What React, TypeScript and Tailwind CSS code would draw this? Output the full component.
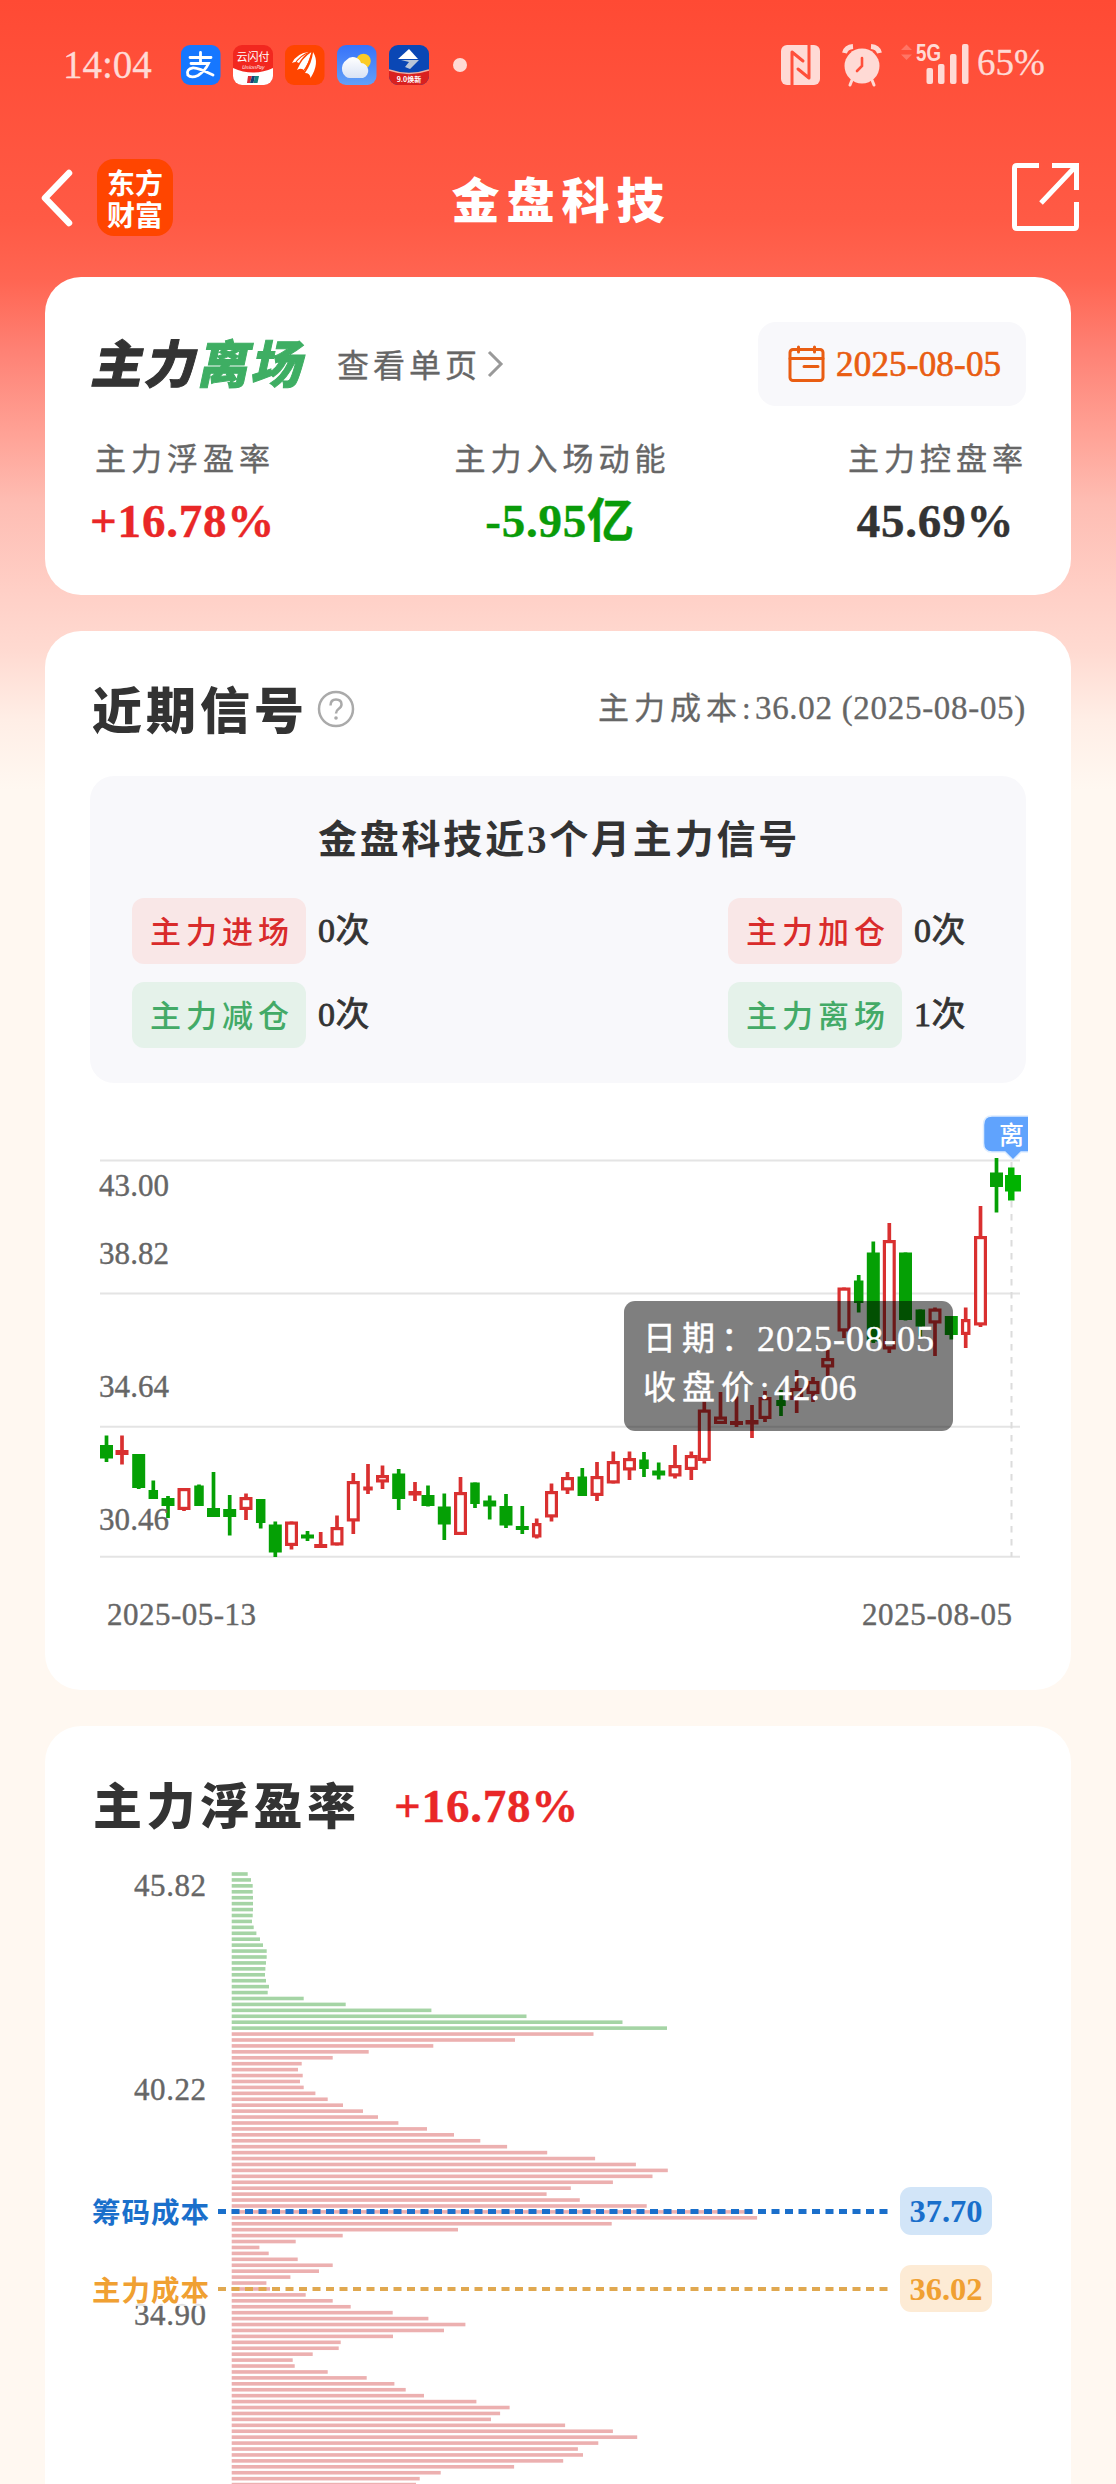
import React from "react";

type Candle = { up: boolean; x: number; hi: number; top: number; bot: number; lo: number; w?: number };

const c = (k: string, x: number, hi: number, top: number, bot: number, lo: number, w = 13): Candle => ({
  up: k === "r", x, hi, top, bot, lo, w,
});

const candles: Candle[] = [
  c("g", 106.5, 1435.5, 1445, 1458.5, 1462),
  c("r", 122, 1435.5, 1450, 1455, 1464.5),
  c("g", 138.7, 1454, 1454, 1488, 1489),
  c("g", 153.3, 1480.5, 1490, 1499, 1499, 9.5),
  c("g", 168, 1496, 1498, 1506, 1518),
  c("r", 184, 1488, 1488, 1510, 1511),
  c("g", 199, 1484.5, 1485.5, 1506, 1506, 9.5),
  c("g", 213.5, 1472, 1508, 1517, 1517),
  c("g", 229.7, 1495, 1509, 1517, 1535.5),
  c("r", 246, 1493.5, 1497, 1510, 1520),
  c("g", 260.7, 1499, 1499, 1523, 1528.5, 9.5),
  c("g", 275.3, 1521.5, 1524.5, 1552.5, 1557),
  c("r", 291.5, 1521.5, 1521.5, 1546, 1549.5),
  c("g", 307.5, 1531, 1534.5, 1538.5, 1541),
  c("r", 320.7, 1532, 1544, 1548, 1548),
  c("r", 337, 1515.5, 1527, 1545.5, 1545.5),
  c("r", 353.3, 1473, 1481, 1521.5, 1534),
  c("r", 368, 1464, 1486.5, 1490.5, 1494, 9.5),
  c("r", 382.5, 1465.5, 1475, 1482.5, 1489),
  c("g", 398.7, 1469, 1473.5, 1499, 1510),
  c("r", 415, 1482, 1491, 1495.5, 1501),
  c("g", 428, 1485.5, 1495, 1506, 1506.5),
  c("g", 444.3, 1493.5, 1506.5, 1524.5, 1540),
  c("r", 460.5, 1477, 1492, 1535, 1535),
  c("g", 475, 1482.5, 1482.5, 1504, 1508, 9.5),
  c("g", 489.7, 1495.5, 1500.5, 1506.5, 1519.5),
  c("g", 506, 1494, 1506, 1525.5, 1528),
  c("g", 522.3, 1506, 1526, 1530, 1534),
  c("r", 536.7, 1518.5, 1523, 1537.5, 1538.5, 9.5),
  c("r", 551.5, 1483.5, 1491, 1517.5, 1521.5),
  c("r", 567.5, 1472, 1477, 1490.5, 1494),
  c("g", 582.3, 1468, 1476.5, 1496, 1496, 9.5),
  c("r", 597, 1462, 1476, 1496, 1501),
  c("r", 613.3, 1451.5, 1461, 1483.5, 1483.5),
  c("r", 629.5, 1451.5, 1458, 1470.5, 1480),
  c("g", 644, 1452, 1459.5, 1469, 1477, 9.5),
  c("g", 658.7, 1462.5, 1470.5, 1475.5, 1479.5),
  c("r", 675, 1445, 1465, 1476.5, 1478.5),
  c("r", 691.3, 1451.5, 1455, 1470, 1480),
  c("r", 704.3, 1401.5, 1409.5, 1461, 1463.5),
  c("r", 720.5, 1392, 1416.5, 1424, 1424),
  c("r", 736.5, 1396.5, 1421, 1425, 1427),
  c("r", 752, 1405, 1420, 1424.5, 1438),
  c("r", 765, 1391, 1397, 1419, 1422),
  c("g", 781, 1390, 1400, 1406, 1416, 9.5),
  c("r", 796.7, 1370, 1388, 1400, 1413),
  c("r", 813, 1377, 1381, 1394, 1402),
  c("r", 827.7, 1350, 1358, 1367.5, 1377),
  c("r", 844, 1287.5, 1287.5, 1331.5, 1338),
  c("g", 858.7, 1275, 1280.5, 1303, 1312.5, 9.5),
  c("g", 873.3, 1241.5, 1252.5, 1341.5, 1343),
  c("r", 889.3, 1223, 1240, 1349.5, 1353),
  c("g", 905.5, 1252.5, 1252.5, 1320, 1320.5),
  c("g", 920.3, 1309.5, 1309.5, 1326.5, 1336.5, 9.5),
  c("r", 935, 1307.5, 1308.5, 1323.5, 1356),
  c("g", 951.3, 1316, 1316, 1335, 1339.5),
  c("r", 965.7, 1307.5, 1319, 1335, 1348, 9.5),
  c("r", 980.5, 1206, 1236, 1325.5, 1327),
  c("g", 996.5, 1158, 1172.5, 1187, 1212.5),
];

const GREEN_BARS = 27;
const bars = [
  16, 19.3, 21, 21, 21.3, 21.3, 21.3, 21, 20.3, 22, 24.7, 28.3, 31.3, 35, 35, 34.3, 33.7, 33.3, 34.3, 37.3, 36, 72, 114,
  199.7, 294.8, 390.8, 435.3, 361.8, 283.3, 201.6, 137, 101, 70, 66.3, 71, 68.3, 72, 83.7, 96, 111.3, 131.3, 146.3,
  166.7, 195.3, 222.3, 248.6, 275.4, 315.5, 363.4, 404.2, 436.1, 420.8, 381.2, 339.1, 314.9, 348.1, 415, 521.5, 525.4,
  380, 226.3, 111, 64, 27.7, 37, 66, 101, 87.3, 58.7, 34.7, 38.3, 74, 101, 119, 161, 196.7, 233.7, 212.3, 161.3, 109,
  107, 81, 61, 63, 96, 135, 162.7, 174, 192.3, 244.7, 277.9, 268.4, 259.3, 333.4, 381.2, 405.5, 366.6, 346.2, 351.3,
  331.5, 282.4, 209, 188, 184.3,
];

function StatusBar() {
  return (
    <div className="flex h-[130px] items-center pl-[63px] text-[#ffdad5]">
      <span className="w-[118px] text-[39px] leading-[60px] [-webkit-text-stroke:0.3px]">14:04</span>
      <div className="flex gap-[12px]">
        <svg width="40" height="40" viewBox="0 0 40 40">
          <rect width="39.5" height="40" rx="9" fill="#1677ff" />
          <g stroke="#fff" strokeWidth="2.8" fill="none" strokeLinecap="round">
            <path d="M9 12.5H30M19.5 7.5V18.5M10 18.5H27.5Q24 26 17 30.5Q10 33.5 6.8 30Q5 24 12 22.8Q17 22.5 32 30" />
          </g>
        </svg>
        <div className="relative flex h-[40px] w-[40px] flex-col items-center overflow-hidden rounded-[9px] bg-[#f2271f] font-['Noto_Sans_CJK_SC',sans-serif] text-white">
          <span className="mt-[4px] text-[11px] leading-[15px] whitespace-nowrap">云闪付</span>
          <span className="text-[5px] leading-[5px] italic">UnionPay</span>
          <svg className="absolute bottom-0 left-0" width="40" height="17" viewBox="0 0 40 17">
            <path d="M0 0Q20 9 40 0V17H0Z" fill="#fff" />
            <path d="M15 8H19L17 15H14Z" fill="#d92b36" />
            <path d="M19 8H22L20.5 15H17Z" fill="#173f78" />
            <path d="M22 8H26L24.5 15H20.5Z" fill="#158080" />
          </svg>
        </div>
        <svg width="40" height="40" viewBox="0 0 40 40">
          <rect width="39.5" height="40" rx="9" fill="#ff4500" />
          <path d="M7 18Q12 8 24 7Q17 12 14 18Q11 16 7 18Z" fill="#fff" />
          <path d="M12 25Q17 13 26.5 7Q24 16 19.5 26Q17 22 12 25Z" fill="#fff" />
          <path d="M20 28Q27 18 28 7Q35 18 25.5 33Q25 28 20 28Z" fill="#fff" />
          <path d="M9 20Q15 10 25 7M17 28Q25 18 27.2 7" stroke="#ff4500" strokeWidth="1.2" fill="none" />
        </svg>
        <svg width="40" height="40" viewBox="0 0 40 40">
          <defs>
            <linearGradient id="sky" x1="0" y1="0" x2="0" y2="1">
              <stop offset="0" stopColor="#3672fa" />
              <stop offset="1" stopColor="#63a0f7" />
            </linearGradient>
            <linearGradient id="cloud" x1="0" y1="0" x2="0" y2="1">
              <stop offset="0" stopColor="#fff" />
              <stop offset="1" stopColor="#d9e2f5" />
            </linearGradient>
          </defs>
          <rect width="39.5" height="40" rx="9" fill="url(#sky)" />
          <circle cx="26.5" cy="16" r="7.3" fill="#fccb25" />
          <path d="M14 33a8 9.5 0 0 1-4.5-18a8.5 8.5 0 0 1 14.5 3a7.7 7.7 0 0 1 2 15z" fill="url(#cloud)" />
        </svg>
        <div className="relative h-[40px] w-[40px] overflow-hidden rounded-[9px] bg-[#0a47b5]">
          <svg width="40" height="40" viewBox="0 0 40 40">
            <path d="M0 25Q20 32 40 25V40H0Z" fill="#d9201f" />
            <path d="M0 25Q20 32 40 25" stroke="#f4b0a0" strokeWidth="1.5" fill="none" />
            <path d="M9 14L20 4L29 14Z" fill="#fff" />
            <path d="M12 15H30L21 24L16 22L20 17Z" fill="#b9c6d8" />
          </svg>
          <span className="absolute bottom-[2px] left-0 w-full text-center font-['Noto_Sans_CJK_SC',sans-serif] text-[7px] leading-[8px] font-bold whitespace-nowrap text-white">
            9.0焕新
          </span>
        </div>
      </div>
      <div className="ml-[24px] h-[14px] w-[14px] rounded-full bg-[#ffdad5]" />
      <div className="ml-[314px] flex items-center">
        <svg width="188" height="50" viewBox="782 40 188 50" className="overflow-visible">
          <rect x="782" y="45" width="39" height="40" rx="6" fill="#ffdad5" />
          <path d="M793 85V52L804 61M810 45V78L799 69" stroke="#ff4f3a" strokeWidth="3" fill="none" strokeLinecap="round" strokeLinejoin="round" />
          <circle cx="863" cy="66" r="17.5" fill="#ffdad5" />
          <path d="M863 58V66L858 71" stroke="#ff4f3a" strokeWidth="2.6" fill="none" strokeLinecap="round" />
          <path d="M845.5 53Q847 47 854 46.5M872 46.5Q879 47 880.5 53" stroke="#ffdad5" strokeWidth="5" fill="none" />
          <path d="M853 80L851 85M873 80L875 85" stroke="#ffdad5" strokeWidth="3" strokeLinecap="round" />
          <path d="M902 50L907.5 44.5L913 50ZM902 54.5L907.5 60L913 54.5Z" fill="#ff7565" />
          <text x="917" y="61" fontSize="23" fontWeight="700" textLength="25" lengthAdjust="spacingAndGlyphs" fill="#ffdad5" className="font-['Liberation_Sans',sans-serif]">5G</text>
          <g fill="#ffdad5">
            <rect x="927.5" y="68" width="6.5" height="16" rx="2" />
            <rect x="939" y="64" width="6.5" height="20" rx="2" />
            <rect x="951" y="54" width="6.5" height="30" rx="2" />
            <rect x="963" y="44" width="6.5" height="40" rx="2" />
          </g>
        </svg>
        <span className="mt-[-4px] ml-[8px] text-[37px] leading-[56px] [-webkit-text-stroke:0.3px]">65%</span>
      </div>
    </div>
  );
}

function Header() {
  return (
    <div className="flex h-[147px] items-start justify-between pt-[29px] pr-[36px] pl-[40px]">
      <div className="flex w-[133px] items-center justify-between">
        <svg width="34" height="60" viewBox="0 0 34 60">
          <path d="M29 5L5 30L29 55" stroke="#fff" strokeWidth="6.5" fill="none" strokeLinecap="round" strokeLinejoin="round" />
        </svg>
        <div className="flex h-[77px] w-[76px] flex-col items-center justify-center rounded-[17px] bg-[#ff4500] font-['Noto_Sans_CJK_SC',sans-serif] text-[28px] leading-[32px] font-bold text-white">
          <span>东方</span>
          <span>财富</span>
        </div>
      </div>
      <h1 className="mt-[3px] mr-[61px] h-[80px] text-[48px] leading-[80px] font-black tracking-[7px] text-white">金盘科技</h1>
      <svg className="mt-[3px]" width="69" height="70" viewBox="0 0 69 70">
        <g stroke="#fff" strokeWidth="5" fill="none">
          <path d="M28 3.5H6Q3.5 3.5 3.5 6V64Q3.5 66.5 6 66.5H63Q65.5 66.5 65.5 64V40" />
          <path d="M41 3.5H65.5V28M65 4L30 41" />
        </g>
      </svg>
    </div>
  );
}

function Metric({ label, value, tone }: { label: string; value: string; tone: string }) {
  return (
    <div className="flex flex-col items-center">
      <span className="mr-[-2px] pl-[3px] text-[31px] leading-[50px] tracking-[5px] text-[#666] [-webkit-text-stroke:0.4px]">{label}</span>
      <span className={"mt-[6px] text-[47px] leading-[60px] font-bold tracking-[0.8px] [-webkit-text-stroke:0.4px] " + tone}>{value}</span>
    </div>
  );
}

function SummaryCard() {
  return (
    <section className="h-[318px] rounded-[36px] bg-white px-[45px] pt-[45px]">
      <div className="flex h-[84px] items-center">
        <div className="h-[60px] w-[215px] skew-x-[-12deg] pl-[4px] font-['Noto_Sans_CJK_SC',sans-serif] text-[51px] leading-[54px] font-black tracking-[2.3px] whitespace-nowrap text-[#333] [-webkit-text-stroke:1px]">
          主力<span className="text-[#3eae63]">离场</span>
        </div>
        <span className="ml-[32px] pt-[3px] text-[32px] leading-[48px] tracking-[4px] text-[#666] [-webkit-text-stroke:0.4px]">查看单页</span>
        <svg className="ml-[5px]" width="18" height="30" viewBox="0 0 18 30">
          <path d="M3 3L15 15L3 27" stroke="#999" strokeWidth="3" fill="none" />
        </svg>
        <div className="ml-auto flex h-[84px] w-[268px] items-center rounded-[18px] bg-[#f8f8fb] pl-[30px] text-[#e95d12]">
          <svg width="37" height="38" viewBox="0 0 37 38">
            <g stroke="#e95d12" strokeWidth="3" fill="none" strokeLinecap="round">
              <rect x="2" y="4.5" width="33" height="31" rx="3" />
              <path d="M2 13.5H35M10.5 2V7M26.5 2V7M16 21.5H30" />
            </g>
          </svg>
          <span className="ml-[11px] pt-[2px] text-[35px] leading-[48px] tracking-[0.2px] [-webkit-text-stroke:0.7px]">2025-08-05</span>
        </div>
      </div>
      <div className="mt-[29px] flex justify-between">
        <Metric label="主力浮盈率" value="+16.78%" tone="text-[#e92727]" />
        <Metric label="主力入场动能" value="-5.95亿" tone="text-[#099b09]" />
        <Metric label="主力控盘率" value="45.69%" tone="text-[#333]" />
      </div>
    </section>
  );
}

function Signal({ name, count, tone }: { name: string; count: string; tone: string }) {
  return (
    <div className="flex items-center">
      <span className={"h-[66px] w-[174px] rounded-[12px] pl-[18px] text-[31px] leading-[70px] font-medium tracking-[5px] " + tone}>{name}</span>
      <span className="ml-[12px] w-[54px] text-[34px] leading-[66px] tracking-[0.5px] whitespace-nowrap text-[#333] [-webkit-text-stroke:0.8px]">{count}</span>
    </div>
  );
}

function PriceChart() {
  return (
    <div className="relative mt-[24px]">
      <svg width="938" height="540" viewBox="90 1107 938 540" className="block">
        <g stroke="#e4e4e4" strokeWidth="2">
          {[1160.5, 1293.5, 1426.7, 1556.7].map((y) => (
            <line key={y} x1="100" x2="1020" y1={y} y2={y} />
          ))}
        </g>
        <line x1="1011.5" x2="1011.5" y1="1162" y2="1557" stroke="#dcdcdc" strokeWidth="2" strokeDasharray="6.5 6.5" />
        {candles.map((k, i) => {
          const w = k.w ?? 13;
          const color = k.up ? "#d93030" : "#05a005";
          const hollow = k.up && k.bot - k.top > 6;
          return (
            <g key={i}>
              <line x1={k.x} x2={k.x} y1={k.hi} y2={k.top + 1} stroke={color} strokeWidth="3.7" />
              <line x1={k.x} x2={k.x} y1={k.bot - 1} y2={k.lo} stroke={color} strokeWidth="3.7" />
              {hollow ? (
                <rect x={k.x - w / 2 + 1.6} y={k.top + 1.6} width={w - 3.2} height={k.bot - k.top - 3.2} fill="#fff" stroke={color} strokeWidth="3.2" />
              ) : (
                <rect x={k.x - w / 2} y={k.top} width={w} height={k.bot - k.top} fill={color} />
              )}
            </g>
          );
        })}
        <rect x="1005" y="1175" width="16" height="16.5" fill="#00b300" />
        <rect x="1008" y="1167.5" width="6.5" height="33" fill="#00b300" />
        <g fontSize="31" fill="#666" stroke="#666" strokeWidth="0.4">
          <text x="99" y="1195.5" textLength="70">43.00</text>
          <text x="99" y="1264" textLength="70">38.82</text>
          <text x="99" y="1397" textLength="70">34.64</text>
          <text x="99" y="1530" textLength="70">30.46</text>
          <text x="107" y="1624.5" textLength="149">2025-05-13</text>
          <text x="862" y="1624.5" textLength="150">2025-08-05</text>
        </g>
        <path d="M992 1116H1040V1152H1021L1013 1160L1005 1152H992Q983.5 1152 983.5 1143V1125Q983.5 1116 992 1116Z" fill="#60a3fd" stroke="#deedff" strokeWidth="1.5" />
        <text x="999" y="1144" fontSize="25" fontWeight="500" fill="#fff">离</text>
      </svg>
      <div className="absolute top-[194px] left-[534px] h-[130px] w-[329px] rounded-[11px] bg-black/50 pt-[14px] pl-[19px] text-[36px] leading-[49px] whitespace-nowrap text-white [-webkit-text-stroke:0.4px]">
        <div className="flex">
          <span className="w-[114px] text-[33px] tracking-[6px]">日期：</span>
          <span className="tracking-[1px]">2025-08-05</span>
        </div>
        <div className="flex">
          <span className="w-[131px] text-[33px] tracking-[6px]">收盘价:</span>
          <span className="tracking-[0.4px]">42.06</span>
        </div>
      </div>
    </div>
  );
}

function SignalCard() {
  return (
    <section className="h-[1059px] rounded-[36px] bg-white px-[45px] pt-[48px]">
      <div className="flex h-[60px] items-center">
        <h2 className="pt-[5px] pl-[2px] text-[50px] leading-[60px] font-black tracking-[4px] text-[#333]">近期信号</h2>
        <svg className="ml-[9px]" width="38" height="38" viewBox="0 0 38 38">
          <circle cx="19" cy="19" r="17" stroke="#aaa" strokeWidth="2.5" fill="none" />
          <path d="M13.5 15.5Q13.5 9.5 19 9.5Q24.5 9.5 24.5 14.5Q24.5 17 21.5 19Q19 20.8 19 23.5" stroke="#aaa" strokeWidth="2.5" fill="none" />
          <circle cx="19" cy="28" r="1.8" fill="#aaa" />
        </svg>
        <div className="ml-auto flex whitespace-nowrap text-[#666] [-webkit-text-stroke:0.3px]">
          <span className="w-[157px] text-[31px] leading-[62px] tracking-[5px]">主力成本:</span>
          <span className="text-[33px] leading-[60px] tracking-[0.7px]">36.02 (2025-08-05)</span>
        </div>
      </div>
      <div className="mt-[37px] h-[307px] rounded-[24px] bg-[#f8f8fb] pt-[33px]">
        <h3 className="pl-[2px] text-center text-[39px] leading-[62px] font-bold tracking-[2.8px] text-[#333]">金盘科技近3个月主力信号</h3>
        <div className="mt-[27px] flex justify-between pr-[58px] pl-[42px]">
          <div className="flex flex-col gap-[18px]">
            <Signal name="主力进场" count="0次" tone="bg-[#f9e7e7] text-[#d92b2b]" />
            <Signal name="主力减仓" count="0次" tone="bg-[#e5f2ea] text-[#43aa67]" />
          </div>
          <div className="flex flex-col gap-[18px]">
            <Signal name="主力加仓" count="0次" tone="bg-[#f9e7e7] text-[#d92b2b]" />
            <Signal name="主力离场" count="1次" tone="bg-[#e5f2ea] text-[#43aa67]" />
          </div>
        </div>
      </div>
      <PriceChart />
    </section>
  );
}

function ProfitCard() {
  return (
    <section className="h-[800px] rounded-[36px] bg-white px-[45px] pt-[50px]">
      <div className="flex h-[60px] items-center">
        <h2 className="w-[304px] pt-[4px] pl-[3px] text-[49px] leading-[60px] font-black tracking-[4.5px] text-[#333]">主力浮盈率</h2>
        <span className="text-[47px] leading-[58px] font-bold tracking-[0.8px] text-[#e92727] [-webkit-text-stroke:0.4px]">+16.78%</span>
      </div>
      <svg width="938" height="634" viewBox="90 1850 938 634" className="mt-[14px] block">
        {bars.map((w, i) => (
          <rect key={i} x="231.7" y={1874 + i * 5.928 - 1.8} width={w} height="3.6" fill={i < GREEN_BARS ? "#a5d4a5" : "#ecb0b0"} />
        ))}
        <g fontSize="31" fill="#666" stroke="#666" strokeWidth="0.4">
          <text x="134" y="1895.5" textLength="72">45.82</text>
          <text x="134" y="2099.5" textLength="72">40.22</text>
          <text x="134" y="2324.5" textLength="72">34.90</text>
        </g>
        <rect x="90" y="2272" width="120" height="34" fill="#fff" fillOpacity="0.8" />
        <line x1="218" x2="889" y1="2211.5" y2="2211.5" stroke="#1a6fcb" strokeWidth="5" strokeDasharray="8 5.5" />
        <line x1="218" x2="889" y1="2289" y2="2289" stroke="#e0a850" strokeWidth="4" strokeDasharray="8 5.5" />
        <g fontSize="28.5" fontWeight="700">
          <text x="92" y="2222.5" textLength="117" fill="#1a6fcb">筹码成本</text>
          <text x="92" y="2300.5" textLength="117" fill="#f0a032">主力成本</text>
        </g>
        <rect x="900" y="2187" width="92" height="48" rx="11" fill="#d2e5f8" />
        <rect x="900" y="2265" width="92" height="47" rx="11" fill="#fdebd5" />
        <g fontSize="32.5" fontWeight="700" textAnchor="middle">
          <text x="946" y="2222" fill="#1a6fcb">37.70</text>
          <text x="946" y="2300" fill="#f0a032">36.02</text>
        </g>
      </svg>
    </section>
  );
}

export default function App() {
  return (
    <main className="h-[2484px] w-[1116px] overflow-hidden bg-[linear-gradient(180deg,#ff4a34_0px,#ff5a45_220px,#ff6552_280px,#fe8174_350px,#ffa397_437px,#febdb3_503px,#ffd0c7_595px,#ffdad1_650px,#ffeee6_720px,#fff8f1_790px)] font-['Liberation_Serif','Noto_Sans_CJK_SC',serif]">
      <StatusBar />
      <Header />
      <div className="flex flex-col gap-[36px] pr-[45px] pl-[45px]">
        <SummaryCard />
        <SignalCard />
        <ProfitCard />
      </div>
    </main>
  );
}
